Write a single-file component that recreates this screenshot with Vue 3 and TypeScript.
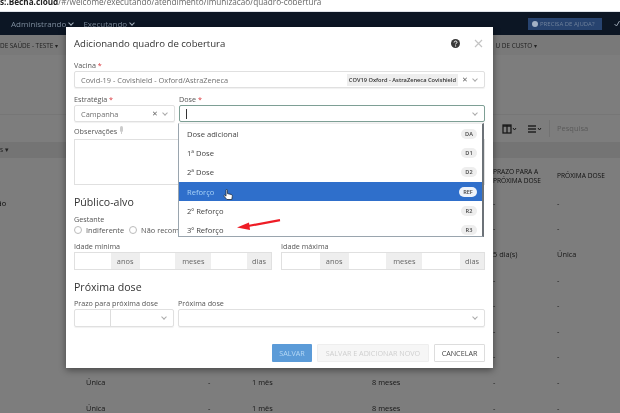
<script setup lang="ts">
interface TableRow {
  tipo: string
  intervalo: string
  reforco: string
  validade: string
  prazo: string
  proxima: string
}

const rows: TableRow[] = [
  { tipo: '', intervalo: '', reforco: '', validade: '', prazo: '-', proxima: '-' },
  { tipo: '', intervalo: '', reforco: '', validade: '', prazo: '-', proxima: '-' },
  { tipo: '', intervalo: '', reforco: '', validade: '', prazo: '5 dia(s)', proxima: 'Única' },
  { tipo: '', intervalo: '', reforco: '', validade: '', prazo: '-', proxima: '-' },
  { tipo: '', intervalo: '', reforco: '', validade: '', prazo: '-', proxima: '-' },
  { tipo: '', intervalo: '', reforco: '', validade: '', prazo: '-', proxima: '-' },
  { tipo: '', intervalo: '', reforco: '', validade: '', prazo: '-', proxima: '-' },
  { tipo: 'Única', intervalo: '-', reforco: '1 mês', validade: '8 meses', prazo: '-', proxima: '-' },
  { tipo: 'Única', intervalo: '-', reforco: '1 mês', validade: '8 meses', prazo: '-', proxima: '-' },
]

const doses = [
  { name: 'Dose adicional', code: 'DA', active: false },
  { name: '1ª Dose', code: 'D1', active: false },
  { name: '2ª Dose', code: 'D2', active: false },
  { name: 'Reforço', code: 'REF', active: true },
  { name: '2º Reforço', code: 'R2', active: false },
  { name: '3º Reforço', code: 'R3', active: false },
]

const ageUnits = ['anos', 'meses', 'dias']
</script>

<template>
  <div class="screen">
    <div class="urlbar"><b>s:.Becha.cloud</b>/#/welcome/executando/atendimento/imunizacao/quadro-cobertura</div>

    <div class="page">
      <nav class="navbar">
        <span class="nav-link first">Administrando <i class="caret"></i></span>
        <span class="nav-link">Executando <i class="caret"></i></span>
        <span class="help-btn"><i class="help-dot"></i>PRECISA DE AJUDA?</span>
        <svg class="nav-check" width="6" height="7" viewBox="0 0 6 7"><path d="M.5 4l2 2L5.5 1" fill="none" stroke="#9aa6b2" /></svg>
      </nav>
      <div class="subnav">
        <span>DE SAÚDE - TESTE ▾</span>
        <span>U DE CUSTO ▾</span>
      </div>
      <div class="toolbar">
        <svg class="tool" width="15" height="10" viewBox="0 0 15 10">
          <rect x="1" y="1" width="8" height="8" fill="none" stroke="#333" stroke-width="1.3" />
          <path d="M1 2h8M5 1v8" stroke="#333" stroke-width="1.3" />
          <path d="M11 4l1.5 2L14 4" fill="none" stroke="#333" />
        </svg>
        <svg class="tool" width="15" height="10" viewBox="0 0 15 10">
          <path d="M1 2h8M1 5h8M1 8h8" stroke="#444" stroke-width="1.3" />
          <path d="M11 4l1.5 2L14 4" fill="none" stroke="#333" />
        </svg>
        <span class="search">Pesquisa</span>
      </div>
      <div class="section-band">s ▾</div>
      <div class="table">
        <div class="row head">
          <span class="lead">A</span><span></span><span></span><span></span><span></span>
          <span>PRAZO PARA A<br />PRÓXIMA DOSE</span>
          <span>PRÓXIMA DOSE</span>
        </div>
        <div v-for="(row, i) in rows" :key="i" class="row">
          <span class="lead">{{ i === 0 ? 'ção' : '' }}</span>
          <span>{{ row.tipo }}</span>
          <span>{{ row.intervalo }}</span>
          <span>{{ row.reforco }}</span>
          <span>{{ row.validade }}</span>
          <span>{{ row.prazo }}</span>
          <span>{{ row.proxima }}</span>
        </div>
      </div>
      <div class="backdrop"></div>
    </div>

    <section class="modal">
      <header class="modal-head">
        <h2>Adicionando quadro de cobertura</h2>
        <svg width="9" height="9" viewBox="0 0 9 9" class="help-icon">
          <circle cx="4.5" cy="4.5" r="4.5" fill="#3a3a3a" />
          <path d="M3.1 3.5c0-2 2.9-1.8 2.9-.2 0 1-1.4 1-1.4 2.1" fill="none" stroke="#fff" />
          <circle cx="4.6" cy="6.9" r=".6" fill="#fff" />
        </svg>
        <svg width="9" height="9" viewBox="0 0 9 9" class="close-icon">
          <path d="M1 1l7 7M8 1L1 8" stroke="#c4c4c4" stroke-width="1.2" />
        </svg>
      </header>

      <label class="lbl">Vacina <em>*</em></label>
      <div class="control">
        <span class="value">Covid-19 - Covishield - Oxford/AstraZeneca</span>
        <span class="tag">COV19 Oxford - AstraZeneca Covishield</span>
        <span class="clear">✕</span><i class="chev"></i>
      </div>

      <div class="two-col second">
        <div>
          <label class="lbl">Estratégia <em>*</em></label>
          <div class="control">
            <span class="value">Campanha</span>
            <span class="clear">✕</span><i class="chev"></i>
          </div>
        </div>
        <div class="dose-field">
          <label class="lbl">Dose <em>*</em></label>
          <div class="control focused">
            <span class="caret-line"></span>
            <i class="chev"></i>
          </div>
          <ul class="dropdown">
            <li v-for="dose in doses" :key="dose.code" :class="{ active: dose.active }">
              <span>{{ dose.name }}</span>
              <span class="code">{{ dose.code }}</span>
            </li>
            <svg class="hand" width="11" height="12" viewBox="0 0 11 12">
              <path d="M3 1.2c0-.9 1.4-.9 1.4 0v3.4l3.6.8c1 .2 1.5.9 1.3 2l-.5 3.1H3.9L1 7.2c-.5-.8.4-1.5 1.1-.9l.9.9z" fill="#fff" stroke="#1d2a3a" stroke-width=".8" />
            </svg>
            <svg class="arrow" width="44" height="12" viewBox="0 0 44 12">
              <path d="M43 1.2L11 7" stroke="#ee1c25" stroke-width="2.2" />
              <path d="M0 8.6L12 3.4l1 7.6z" fill="#ee1c25" />
            </svg>
          </ul>
        </div>
      </div>

      <label class="lbl obs">Observações
        <svg width="5" height="8" viewBox="0 0 5 8"><rect x="1" width="3" height="6" rx="1.5" fill="#ccc" /><path d="M2.5 6v2" stroke="#ccc" /></svg>
      </label>
      <div class="textarea"></div>

      <h3 class="publico">Público-alvo</h3>
      <label class="lbl">Gestante</label>
      <div class="radios">
        <span class="radio"><i></i>Indiferente</span>
        <span class="radio"><i></i>Não recomendado</span>
      </div>

      <div class="ages">
        <div v-for="title in ['Idade mínima', 'Idade máxima']" :key="title">
          <label class="lbl">{{ title }}</label>
          <div class="age-group">
            <template v-for="unit in ageUnits" :key="unit">
              <span class="age-input"></span>
              <span class="addon" :class="unit">{{ unit }}</span>
            </template>
          </div>
        </div>
      </div>

      <h3 class="proxima">Próxima dose</h3>
      <div class="two-col next">
        <div>
          <label class="lbl">Prazo para próxima dose</label>
          <div class="control split">
            <span class="split-left"></span>
            <span class="value"></span>
            <i class="chev"></i>
          </div>
        </div>
        <div>
          <label class="lbl">Próxima dose</label>
          <div class="control"><span class="value"></span><i class="chev"></i></div>
        </div>
      </div>

      <footer class="actions">
        <button class="btn save">SALVAR</button>
        <button class="btn add">SALVAR E ADICIONAR NOVO</button>
        <button class="btn cancel">CANCELAR</button>
      </footer>
    </section>
  </div>
</template>

<style scoped>
.screen {
  position: relative;
  width: 620px;
  height: 413px;
  overflow: hidden;
  background: #fff;
  font-family: 'Open Sans', 'Liberation Sans', sans-serif;
  filter: blur(0.45px);
}

.urlbar {
  height: 11px;
  border-bottom: 1px solid #dfe3e8;
  font-size: 8.2px;
  line-height: 3px;
  color: #666;
  white-space: nowrap;
  overflow: hidden;
}

.urlbar b {
  color: #222;
}

.page {
  position: relative;
  height: 401px;
  background: #fbfbfb;
}

.backdrop {
  position: absolute;
  inset: 23px 0 0;
  background: rgba(0, 0, 0, 0.5);
}

.navbar {
  height: 23px;
  display: flex;
  align-items: center;
  background: #0c1624;
  color: #7c8b9b;
  font-size: 8px;
}

.nav-link {
  margin-right: 10px;
}

.nav-link.first {
  margin-left: 11px;
}

.caret {
  display: inline-block;
  width: 3px;
  height: 3px;
  margin: 0 0 2px 1px;
  border-right: 1px solid #a9b6c2;
  border-bottom: 1px solid #a9b6c2;
  transform: rotate(45deg);
}

.help-btn {
  margin-left: auto;
  width: 74px;
  height: 12px;
  display: flex;
  align-items: center;
  gap: 2px;
  padding-left: 4px;
  box-sizing: border-box;
  background: #27436f;
  color: #6f819b;
  font-size: 6px;
  white-space: nowrap;
}

.help-dot {
  width: 6px;
  height: 6px;
  border-radius: 50%;
  background: #a3b2c6;
}

.nav-check {
  margin: 0 0 0 12px;
  flex: none;
}

.subnav {
  height: 20px;
  display: flex;
  justify-content: space-between;
  align-items: center;
  padding-right: 83px;
  background: #f2f2f2;
  color: #444;
  font-size: 6.4px;
}

.toolbar {
  height: 28px;
  margin-top: 59px;
  display: flex;
  align-items: center;
  justify-content: flex-end;
  gap: 10px;
  background: #fbfbfb;
  border-top: 1px solid #ececec;
  box-sizing: border-box;
}

.search {
  width: 71px;
  height: 17px;
  margin-left: -3px;
  padding-left: 7px;
  box-sizing: border-box;
  border-left: 1px solid #e4e4e4;
  color: #b4b4b4;
  font-size: 7.5px;
  line-height: 17px;
}

.section-band {
  height: 16px;
  background: #e9e9e9;
  color: #444;
  font-size: 6.5px;
  line-height: 16px;
}

.table {
  color: #333;
  font-size: 7.4px;
}

.row {
  height: 25.6px;
  display: grid;
  grid-template-columns: 86px 122px 44px 120px 121px 64px 63px;
  align-items: center;
}

.row.head {
  height: 28px;
  margin-top: 4px;
  font-size: 6.6px;
  line-height: 9.5px;
  color: #222;
}

.lead {
  margin-left: -6px;
  color: #111;
}

.modal {
  position: absolute;
  left: 66px;
  top: 27px;
  width: 427px;
  height: 341px;
  padding: 0 8px;
  box-sizing: border-box;
  background: #fff;
  box-shadow: 0 2px 7px rgba(0, 0, 0, 0.45);
  color: #444;
}

.modal-head {
  height: 33px;
  display: flex;
  align-items: center;
}

.modal-head h2 {
  flex: 1;
  margin: 0;
  font-size: 9.6px;
  font-weight: 400;
  color: #333;
}

.help-icon {
  margin-right: 14px;
}

.close-icon {
  margin-right: 2px;
}

.lbl {
  display: block;
  height: 11px;
  font-size: 7.2px;
  line-height: 11px;
  color: #555;
}

.lbl em {
  color: #d9343a;
  font-style: normal;
}

.control {
  height: 17px;
  display: flex;
  align-items: center;
  padding: 0 6px;
  box-sizing: border-box;
  border: 1px solid #e0e0e0;
  border-radius: 2px;
  box-shadow: 0 1px 1px rgba(0, 0, 0, 0.06);
  font-size: 7.4px;
  color: #707070;
}

.control.focused {
  border-color: #7e9f95;
}

.caret-line {
  width: 1px;
  height: 10px;
  background: #333;
}

.value {
  flex: 1;
}

.tag {
  padding: 0 2px;
  background: #eee;
  color: #333;
  font-size: 5.7px;
  font-weight: 600;
  line-height: 12px;
}

.clear {
  margin-left: 4px;
  font-size: 6.5px;
  color: #666;
}

.chev {
  width: 3px;
  height: 3px;
  margin: 0 1px 2px auto;
  border-right: 1px solid #aaa;
  border-bottom: 1px solid #aaa;
  transform: rotate(45deg);
}

.clear + .chev {
  margin-left: 5px;
}

.two-col {
  display: grid;
  grid-template-columns: 101px 306px;
  column-gap: 4px;
}

.two-col.second {
  margin-top: 6px;
}

.dose-field {
  position: relative;
}

.dropdown {
  position: absolute;
  left: -1px;
  top: 29px;
  z-index: 2;
  width: 306px;
  height: 114px;
  margin: 0;
  padding: 0;
  box-sizing: border-box;
  list-style: none;
  background: #fff;
  border: 1px solid #9aa5ae;
  border-top-color: #eee;
  border-right: 2px solid #6c7278;
  font-size: 7.6px;
  color: #444;
}

.dropdown li {
  height: 19.2px;
  display: flex;
  align-items: center;
  justify-content: space-between;
  padding: 0 5px 0 8px;
}

.dropdown li:first-child {
  margin-top: 0.5px;
}

.dropdown li.active {
  background: #2f6fcb;
  color: #a8d2f7;
}

.code {
  min-width: 10px;
  padding: 1px 3px;
  border-radius: 5px;
  background: #eee;
  color: #444;
  font-size: 5.6px;
  font-weight: 600;
  line-height: 8px;
  text-align: center;
}

.active .code {
  background: #eef3fa;
  padding: 1px 4px;
}

.hand {
  position: absolute;
  left: 44px;
  top: 65px;
}

.arrow {
  position: absolute;
  left: 58px;
  top: 95px;
}

.lbl.obs {
  margin-top: 4px;
}

.textarea {
  height: 46px;
  margin-top: 2px;
  border: 1px solid #e0e0e0;
  box-sizing: border-box;
}

h3 {
  margin: 0;
  font-size: 10.6px;
  font-weight: 400;
  color: #333;
}

.publico {
  margin-top: 8px;
  height: 19px;
  line-height: 19px;
}

.publico + .lbl {
  margin-top: 2px;
}

.radios {
  height: 11px;
  display: flex;
  gap: 5px;
  font-size: 7.4px;
  line-height: 11px;
  color: #555;
}

.radio i {
  display: inline-block;
  width: 6px;
  height: 6px;
  margin: 0 4px 0 0;
  border: 1px solid #bbb;
  border-radius: 50%;
  vertical-align: -1px;
}

.ages {
  margin-top: 5px;
  display: grid;
  grid-template-columns: 198px 204px;
  column-gap: 9px;
}

.age-group {
  height: 18px;
  display: flex;
  border: 1px solid #e0e0e0;
  box-sizing: border-box;
}

.age-input {
  flex: 1;
}

.addon {
  background: #eee;
  color: #666;
  font-size: 7.4px;
  line-height: 16px;
  text-align: center;
}

.addon.anos {
  width: 29px;
}

.addon.meses {
  width: 36px;
}

.addon.dias {
  width: 24px;
}

.proxima {
  margin-top: 8px;
  height: 19px;
  line-height: 19px;
}

.two-col.next {
  margin-top: 1px;
  grid-template-columns: 100px 307px;
}

.next .control {
  height: 18px;
}

.split {
  padding-left: 0;
}

.split-left {
  width: 35px;
  height: 100%;
  border-right: 1px solid #ddd;
}

.actions {
  margin-top: 17px;
  display: flex;
  justify-content: flex-end;
  gap: 5px;
}

.btn {
  height: 18px;
  padding: 0;
  border: 1px solid transparent;
  border-radius: 1px;
  font-family: inherit;
  font-size: 7.2px;
}

.save {
  width: 40px;
  background: #5b9bd8;
  color: #b5d8f5;
}

.add {
  width: 112px;
  background: #f6f6f6;
  border-color: #eee;
  color: #cfcfcf;
}

.cancel {
  width: 51px;
  background: #fff;
  border-color: #ddd;
  color: #444;
}
</style>
